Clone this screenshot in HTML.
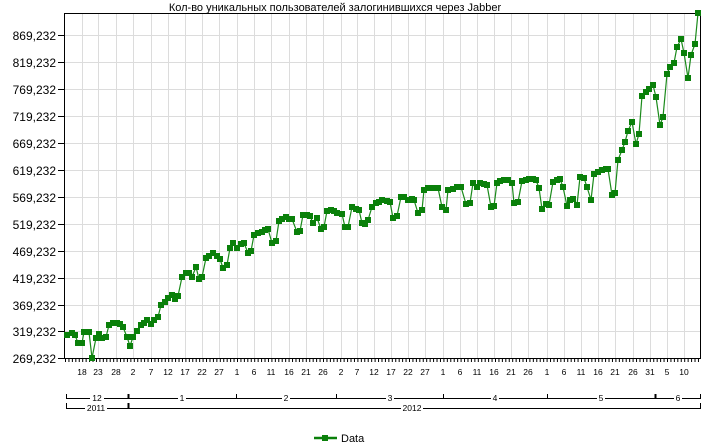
<!DOCTYPE html>
<html><head><meta charset="utf-8"><style>
html,body{margin:0;padding:0;background:#fff;width:712px;height:447px;overflow:hidden}
svg{display:block;font-family:"Liberation Sans",Arial,sans-serif}
</style></head><body>
<svg width="712" height="447" viewBox="0 0 712 447" xmlns="http://www.w3.org/2000/svg">
<rect width="712" height="447" fill="#fff"/>
<text x="335" y="11" font-size="11" text-anchor="middle" fill="#000">Кол-во уникальных пользователей залогинившихся через Jabber</text>
<g stroke="#dcdcdc" stroke-width="1">
<path d="M64 35.5H700M64 62.5H700M64 89.5H700M64 116.5H700M64 143.5H700M64 170.5H700M64 197.5H700M64 224.5H700M64 251.5H700M64 278.5H700M64 305.5H700M64 331.5H700"/>
<path d="M82.5 13V358M98.5 13V358M116.5 13V358M133.5 13V358M151.5 13V358M168.5 13V358M185.5 13V358M202.5 13V358M219.5 13V358M237.5 13V358M254.5 13V358M271.5 13V358M289.5 13V358M306.5 13V358M323.5 13V358M341.5 13V358M357.5 13V358M374.5 13V358M391.5 13V358M408.5 13V358M425.5 13V358M443.5 13V358M460.5 13V358M477.5 13V358M494.5 13V358M511.5 13V358M528.5 13V358M547.5 13V358M564.5 13V358M581.5 13V358M598.5 13V358M615.5 13V358M633.5 13V358M650.5 13V358M667.5 13V358M684.5 13V358"/>
</g>
<rect x="64.5" y="13.5" width="636" height="345" fill="none" stroke="#000" stroke-width="1"/>
<g stroke="#000"><path d="M58 35.5H64M58 62.5H64M58 89.5H64M58 116.5H64M58 143.5H64M58 170.5H64M58 197.5H64M58 224.5H64M58 251.5H64M58 278.5H64M58 305.5H64M58 331.5H64M58 358.5H64"/>
<line x1="65" y1="360" x2="701" y2="360" stroke-width="4" stroke-dasharray="1 2.44"/>
</g>
<g font-size="12" text-anchor="end" fill="#000">
<text x="56" y="40">869,232</text><text x="56" y="67">819,232</text><text x="56" y="94">769,232</text><text x="56" y="121">719,232</text><text x="56" y="148">669,232</text><text x="56" y="175">619,232</text><text x="56" y="202">569,232</text><text x="56" y="229">519,232</text><text x="56" y="256">469,232</text><text x="56" y="283">419,232</text><text x="56" y="310">369,232</text><text x="56" y="336">319,232</text><text x="56" y="363">269,232</text>
</g>
<g font-size="8.5" text-anchor="middle" fill="#000">
<text x="82" y="375">18</text><text x="98" y="375">23</text><text x="116" y="375">28</text><text x="133" y="375">2</text><text x="151" y="375">7</text><text x="168" y="375">12</text><text x="185" y="375">17</text><text x="202" y="375">22</text><text x="219" y="375">27</text><text x="237" y="375">1</text><text x="254" y="375">6</text><text x="271" y="375">11</text><text x="289" y="375">16</text><text x="306" y="375">21</text><text x="323" y="375">26</text><text x="341" y="375">2</text><text x="357" y="375">7</text><text x="374" y="375">12</text><text x="391" y="375">17</text><text x="408" y="375">22</text><text x="425" y="375">27</text><text x="443" y="375">1</text><text x="460" y="375">6</text><text x="477" y="375">11</text><text x="494" y="375">16</text><text x="511" y="375">21</text><text x="528" y="375">26</text><text x="547" y="375">1</text><text x="564" y="375">6</text><text x="581" y="375">11</text><text x="598" y="375">16</text><text x="615" y="375">21</text><text x="633" y="375">26</text><text x="650" y="375">31</text><text x="667" y="375">5</text><text x="684" y="375">10</text>
</g>
<g stroke="#000" fill="none">
<path d="M66.5 394V398.5H700.5V394M128.5 394V398.5M236.5 394V398.5M336.5 394V398.5M443.5 394V398.5M547.5 394V398.5"/>
<path d="M655.5 394V398.5" stroke-width="2"/>
<path d="M66.5 403V408.5H700.5V403M128.5 403V408.5" />
<path d="M128.5 403V408.5" stroke-width="2"/>
<path d="M128.5 394V398.5" stroke-width="2"/>
</g>
<g font-size="8.5" text-anchor="middle" fill="#000">
<rect x="90" y="394" width="14" height="8" fill="#fff"/><text x="97" y="401">12</text>
<rect x="178" y="394" width="8" height="8" fill="#fff"/><text x="182" y="401">1</text>
<rect x="282" y="394" width="8" height="8" fill="#fff"/><text x="286" y="401">2</text>
<rect x="386" y="394" width="8" height="8" fill="#fff"/><text x="390" y="401">3</text>
<rect x="491" y="394" width="8" height="8" fill="#fff"/><text x="495" y="401">4</text>
<rect x="597" y="394" width="8" height="8" fill="#fff"/><text x="601" y="401">5</text>
<rect x="674" y="394" width="8" height="8" fill="#fff"/><text x="678" y="401">6</text>
<rect x="85" y="404" width="22" height="8" fill="#fff"/><text x="96" y="411">2011</text>
<rect x="401" y="404" width="22" height="8" fill="#fff"/><text x="412" y="411">2012</text>
</g>
<polyline fill="none" stroke="#1a8a1a" stroke-width="1.2" points="67,335 72,333 75,335 78,343 82,343 84,332 89,332 92,358 96,338 99,334 102,338 106,337 109,325 113,323 117,323 120,324 123,327 127,337 130,346 133,337 137,331 141,325 144,323 147,320 151,324 154,320 158,317 161,305 165,302 168,298 172,295 175,299 178,296 182,277 186,273 189,273 192,277 196,267 199,279 202,277 206,258 209,256 213,253 217,256 220,259 223,268 227,265 230,248 233,243 237,248 241,244 244,243 248,253 251,251 254,235 258,233 262,232 265,230 268,229 272,243 276,241 279,221 282,219 286,217 289,219 292,219 297,232 300,231 303,215 307,215 310,216 313,223 317,218 321,229 324,227 327,211 331,210 334,211 337,213 342,214 345,227 348,227 352,207 356,209 359,210 362,223 365,224 368,220 372,207 376,203 379,202 382,200 387,201 390,202 393,218 397,216 401,197 404,197 408,200 412,199 414,200 418,213 422,210 424,190 428,188 433,188 438,188 442,207 446,210 448,190 453,189 457,187 461,187 466,204 470,203 473,183 477,187 480,183 484,184 487,185 491,207 494,206 497,183 500,181 504,180 508,180 512,183 514,203 518,202 522,181 526,180 529,179 533,179 536,180 539,188 542,209 546,204 549,205 553,182 557,180 560,179 563,187 567,206 570,200 573,199 577,205 580,177 584,178 587,187 591,200 594,174 598,172 602,170 606,169 608,169 612,195 615,193 618,160 622,150 625,142 628,131 632,122 636,144 639,134 642,96 646,92 649,89 653,85 656,97 660,125 663,117 667,74 670,67 674,63 677,47 681,39 684,53 688,78 691,55 695,44 698,13"/>
<g id="m" fill="#0a800a">
<path d="M64 332h6v6h-6zM69 330h6v6h-6zM72 332h6v6h-6zM75 340h6v6h-6zM79 340h6v6h-6zM81 329h6v6h-6zM86 329h6v6h-6zM89 355h6v6h-6zM93 335h6v6h-6zM96 331h6v6h-6zM99 335h6v6h-6zM103 334h6v6h-6zM106 322h6v6h-6zM110 320h6v6h-6zM114 320h6v6h-6zM117 321h6v6h-6zM120 324h6v6h-6zM124 334h6v6h-6zM127 343h6v6h-6zM130 334h6v6h-6zM134 328h6v6h-6zM138 322h6v6h-6zM141 320h6v6h-6zM144 317h6v6h-6zM148 321h6v6h-6zM151 317h6v6h-6zM155 314h6v6h-6zM158 302h6v6h-6zM162 299h6v6h-6zM165 295h6v6h-6zM169 292h6v6h-6zM172 296h6v6h-6zM175 293h6v6h-6zM179 274h6v6h-6zM183 270h6v6h-6zM186 270h6v6h-6zM189 274h6v6h-6zM193 264h6v6h-6zM196 276h6v6h-6zM199 274h6v6h-6zM203 255h6v6h-6zM206 253h6v6h-6zM210 250h6v6h-6zM214 253h6v6h-6zM217 256h6v6h-6zM220 265h6v6h-6zM224 262h6v6h-6zM227 245h6v6h-6zM230 240h6v6h-6zM234 245h6v6h-6zM238 241h6v6h-6zM241 240h6v6h-6zM245 250h6v6h-6zM248 248h6v6h-6zM251 232h6v6h-6zM255 230h6v6h-6zM259 229h6v6h-6zM262 227h6v6h-6zM265 226h6v6h-6zM269 240h6v6h-6zM273 238h6v6h-6zM276 218h6v6h-6zM279 216h6v6h-6zM283 214h6v6h-6zM286 216h6v6h-6zM289 216h6v6h-6zM294 229h6v6h-6zM297 228h6v6h-6zM300 212h6v6h-6zM304 212h6v6h-6zM307 213h6v6h-6zM310 220h6v6h-6zM314 215h6v6h-6zM318 226h6v6h-6zM321 224h6v6h-6zM324 208h6v6h-6zM328 207h6v6h-6zM331 208h6v6h-6zM334 210h6v6h-6zM339 211h6v6h-6zM342 224h6v6h-6zM345 224h6v6h-6zM349 204h6v6h-6zM353 206h6v6h-6zM356 207h6v6h-6zM359 220h6v6h-6zM362 221h6v6h-6zM365 217h6v6h-6zM369 204h6v6h-6zM373 200h6v6h-6zM376 199h6v6h-6zM379 197h6v6h-6zM384 198h6v6h-6zM387 199h6v6h-6zM390 215h6v6h-6zM394 213h6v6h-6zM398 194h6v6h-6zM401 194h6v6h-6zM405 197h6v6h-6zM409 196h6v6h-6zM411 197h6v6h-6zM415 210h6v6h-6zM419 207h6v6h-6zM421 187h6v6h-6zM425 185h6v6h-6zM430 185h6v6h-6zM435 185h6v6h-6zM439 204h6v6h-6zM443 207h6v6h-6zM445 187h6v6h-6zM450 186h6v6h-6zM454 184h6v6h-6zM458 184h6v6h-6zM463 201h6v6h-6zM467 200h6v6h-6zM470 180h6v6h-6zM474 184h6v6h-6zM477 180h6v6h-6zM481 181h6v6h-6zM484 182h6v6h-6zM488 204h6v6h-6zM491 203h6v6h-6zM494 180h6v6h-6zM497 178h6v6h-6zM501 177h6v6h-6zM505 177h6v6h-6zM509 180h6v6h-6zM511 200h6v6h-6zM515 199h6v6h-6zM519 178h6v6h-6zM523 177h6v6h-6zM526 176h6v6h-6zM530 176h6v6h-6zM533 177h6v6h-6zM536 185h6v6h-6zM539 206h6v6h-6zM543 201h6v6h-6zM546 202h6v6h-6zM550 179h6v6h-6zM554 177h6v6h-6zM557 176h6v6h-6zM560 184h6v6h-6zM564 203h6v6h-6zM567 197h6v6h-6zM570 196h6v6h-6zM574 202h6v6h-6zM577 174h6v6h-6zM581 175h6v6h-6zM584 184h6v6h-6zM588 197h6v6h-6zM591 171h6v6h-6zM595 169h6v6h-6zM599 167h6v6h-6zM603 166h6v6h-6zM605 166h6v6h-6zM609 192h6v6h-6zM612 190h6v6h-6zM615 157h6v6h-6zM619 147h6v6h-6zM622 139h6v6h-6zM625 128h6v6h-6zM629 119h6v6h-6zM633 141h6v6h-6zM636 131h6v6h-6zM639 93h6v6h-6zM643 89h6v6h-6zM646 86h6v6h-6zM650 82h6v6h-6zM653 94h6v6h-6zM657 122h6v6h-6zM660 114h6v6h-6zM664 71h6v6h-6zM667 64h6v6h-6zM671 60h6v6h-6zM674 44h6v6h-6zM678 36h6v6h-6zM681 50h6v6h-6zM685 75h6v6h-6zM688 52h6v6h-6zM692 41h6v6h-6zM695 10h6v6h-6z"/>
</g>
<line x1="314" y1="438" x2="337" y2="438" stroke="#0a800a" stroke-width="2.5"/>
<rect x="322" y="435" width="6" height="6" fill="#0a800a"/>
<text x="341" y="442" font-size="11" fill="#000">Data</text>
</svg>
</body></html>
